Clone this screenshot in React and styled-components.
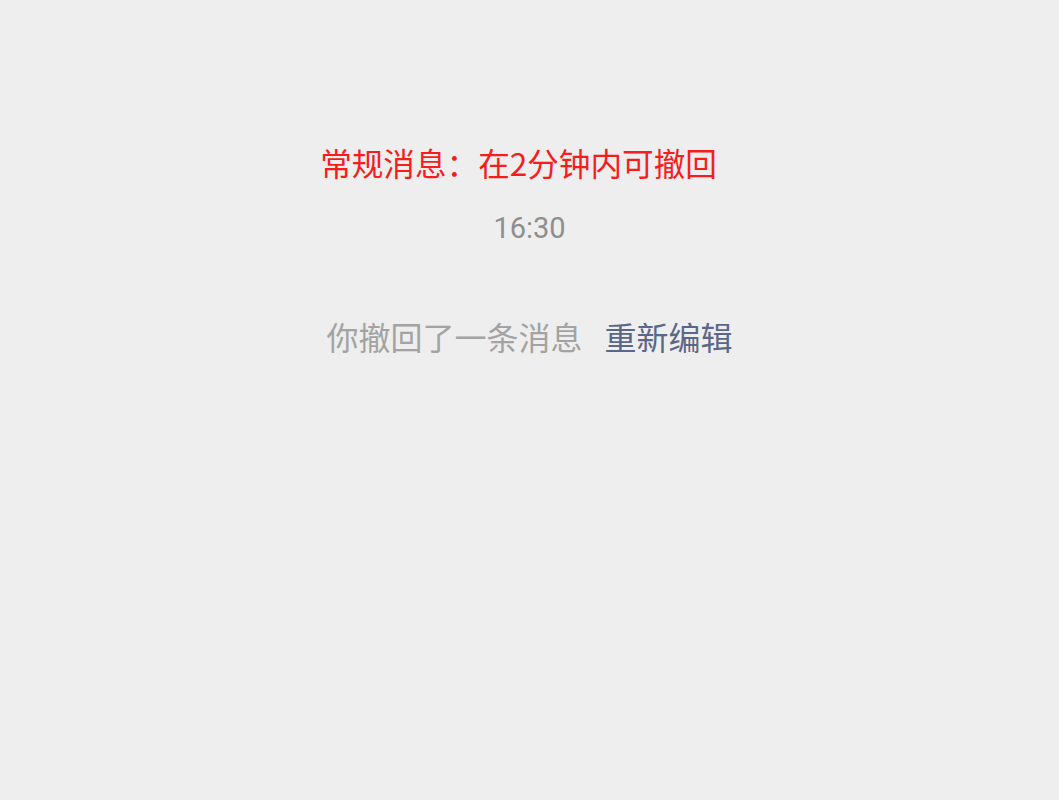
import React from "react";
import styled, { createGlobalStyle } from "styled-components";

const GlobalStyle = createGlobalStyle`
  html, body {
    margin: 0;
    padding: 0;
    background: #eeeeee;
  }
  body {
    font-family: "Noto Sans CJK SC", "Noto Sans", sans-serif;
  }
`;

const Page = styled.div`
  min-height: 800px;
  display: flex;
  flex-direction: column;
  align-items: center;
  padding-top: 140px;
  box-sizing: border-box;
`;

const Title = styled.div`
  color: #f71d1d;
  font-size: 31.6px;
  line-height: 44px;
  padding-right: 22px;
`;

const Time = styled.div`
  margin-top: 24px;
  color: #8e8e8e;
  font-family: Roboto, "Noto Sans", sans-serif;
  font-size: 29px;
  line-height: 40px;
`;

const Notice = styled.div`
  margin-top: 66px;
  display: flex;
  align-items: center;
  gap: 22px;
  font-size: 32px;
  line-height: 44px;
`;

const Muted = styled.span`
  color: #a3a3a3;
`;

const Link = styled.span`
  color: #5a6788;
  cursor: pointer;
`;

export default function App() {
  return (
    <>
      <GlobalStyle />
      <Page>
        <Title>常规消息：在2分钟内可撤回</Title>
        <Time>16:30</Time>
        <Notice>
          <Muted>你撤回了一条消息</Muted>
          <Link>重新编辑</Link>
        </Notice>
      </Page>
    </>
  );
}
